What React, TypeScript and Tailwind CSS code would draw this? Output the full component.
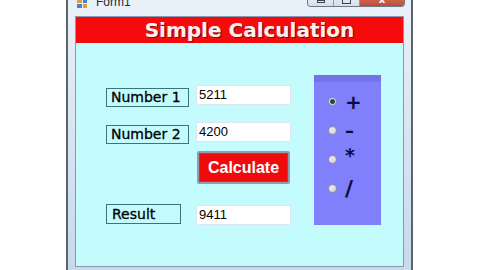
export default function App() {
  return (
    <div className="w-[480px] h-[270px] bg-white overflow-hidden flex font-['DejaVu_Sans',sans-serif]">
      {/* window */}
      <div className="ml-[66px] -mt-[6px] w-[347px] h-[278px] shrink-0 flex flex-col border-x-2 border-b border-[#5c636d] bg-gradient-to-b from-[#eaf1f9] to-[#c9d8eb] px-[7px]">
        {/* title bar */}
        <div className="h-[22px] flex items-start">
          <div className="mt-[5px] ml-[2px] w-[10px] h-[9px] grid grid-cols-2 gap-px">
            <div className="bg-[#e0a030]" />
            <div className="bg-[#4a7fd0]" />
            <div className="bg-[#4a7fd0]" />
            <div className="bg-[#e0a030]" />
          </div>
          <div className="ml-[9px] mt-[1px] text-[12px] leading-[14px] text-[#1e2a3a] font-['Liberation_Sans',sans-serif]">
            Form1
          </div>
          <div className="ml-auto -mr-[1px] flex h-[13px] rounded-b-[4px] border border-t-0 border-[#6b7888] overflow-hidden">
            <div className="w-[26px] bg-gradient-to-b from-[#eef3f9] to-[#d3dfed] border-r border-[#8a97a8] flex items-end justify-center pb-[3px]">
              <div className="w-[8px] h-[3px] border border-[#444]" />
            </div>
            <div className="w-[26px] bg-gradient-to-b from-[#eef3f9] to-[#d3dfed] border-r border-[#8a97a8] flex items-end justify-center pb-[2px]">
              <div className="w-[9px] h-[7px] border border-[#444] border-t-2" />
            </div>
            <div className="w-[44px] bg-gradient-to-b from-[#d47a66] to-[#c14a36] flex items-end justify-center text-white text-[10px] font-bold leading-[10px] pb-[1px]">
              x
            </div>
          </div>
        </div>

        {/* client area */}
        <div className="flex-1 flex flex-col border border-[#8799b0] bg-[#c4fcfe]">
          <div className="h-[26px] bg-[#f50b0b] flex items-center justify-center pl-[20px] text-[20px] font-bold leading-none [text-shadow:1px_1px_0_#7c1010]">
            <span className="text-[#fff0f0]">Simple Calculation</span>
          </div>

          <div className="flex items-start pl-[30px]">
            {/* fields */}
            <div className="flex flex-col pt-[42px] text-[14px] text-black [-webkit-text-stroke:0.3px_#000]">
              <div className="flex items-start">
                <div className="mt-[3px] w-[83px] h-[19px] border border-[#3a7676] px-[4px] leading-[17px]">Number 1</div>
                <div className="ml-[7px] w-[95px] h-[20px] bg-white border border-[#dbe6ee] px-[2px] text-[13px] leading-[18px] [-webkit-text-stroke:0px] font-['Liberation_Sans',sans-serif]">5211</div>
              </div>
              <div className="flex items-start mt-[15px]">
                <div className="mt-[3px] w-[83px] h-[19px] border border-[#3a7676] px-[4px] leading-[17px]">Number 2</div>
                <div className="ml-[7px] w-[95px] h-[20px] bg-white border border-[#dbe6ee] px-[2px] text-[13px] leading-[18px] [-webkit-text-stroke:0px] font-['Liberation_Sans',sans-serif]">4200</div>
              </div>
              <div className="ml-[91px] mt-[7px] w-[93px] h-[33px] rounded-[2px] border-2 border-[#8b9db4] bg-[#ef0b0b] flex items-center justify-center text-white text-[16px] font-bold [-webkit-text-stroke:0px] font-['Liberation_Sans',sans-serif] [box-shadow:inset_0_0_0_1px_#b04040]">
                Calculate
              </div>
              <div className="flex items-start mt-[20px]">
                <div className="w-[75px] h-[20px] border border-[#3a7676] px-[5px] leading-[18px]">Result</div>
                <div className="ml-[15px] mt-[1px] w-[95px] h-[20px] bg-white border border-[#dbe6ee] px-[2px] text-[13px] leading-[18px] [-webkit-text-stroke:0px] font-['Liberation_Sans',sans-serif]">9411</div>
              </div>
            </div>

            {/* operation group */}
            <div className="ml-[23px] mt-[32px] w-[67px] h-[150px] bg-[#8080fd] flex flex-col">
              <div className="h-[7px] bg-[#7474e6]" />
              <div className="flex flex-col pt-[5px] pl-[14px] text-[#0c0c3c] font-bold">
                {[
                  { sign: "+", on: true, cls: "text-[20px]" },
                  { sign: "–", on: false, cls: "text-[18px]" },
                  { sign: "*", on: false, cls: "text-[19px] -mt-[8px]" },
                  { sign: "/", on: false, cls: "text-[22px]" },
                ].map((r) => (
                  <div key={r.sign} className="h-[29px] flex items-center">
                    <div className="w-[9px] h-[9px] rounded-full border border-[#8d8d9a] bg-gradient-to-br from-[#f4f4f4] to-[#cfcfd6] flex items-center justify-center">
                      {r.on && <div className="w-[5px] h-[5px] rounded-full bg-[#1d4d5c]" />}
                    </div>
                    <span className={"ml-[8px] leading-none " + r.cls}>{r.sign}</span>
                  </div>
                ))}
              </div>
            </div>
          </div>
        </div>
        <div className="h-[4px]" />
      </div>
    </div>
  );
}
